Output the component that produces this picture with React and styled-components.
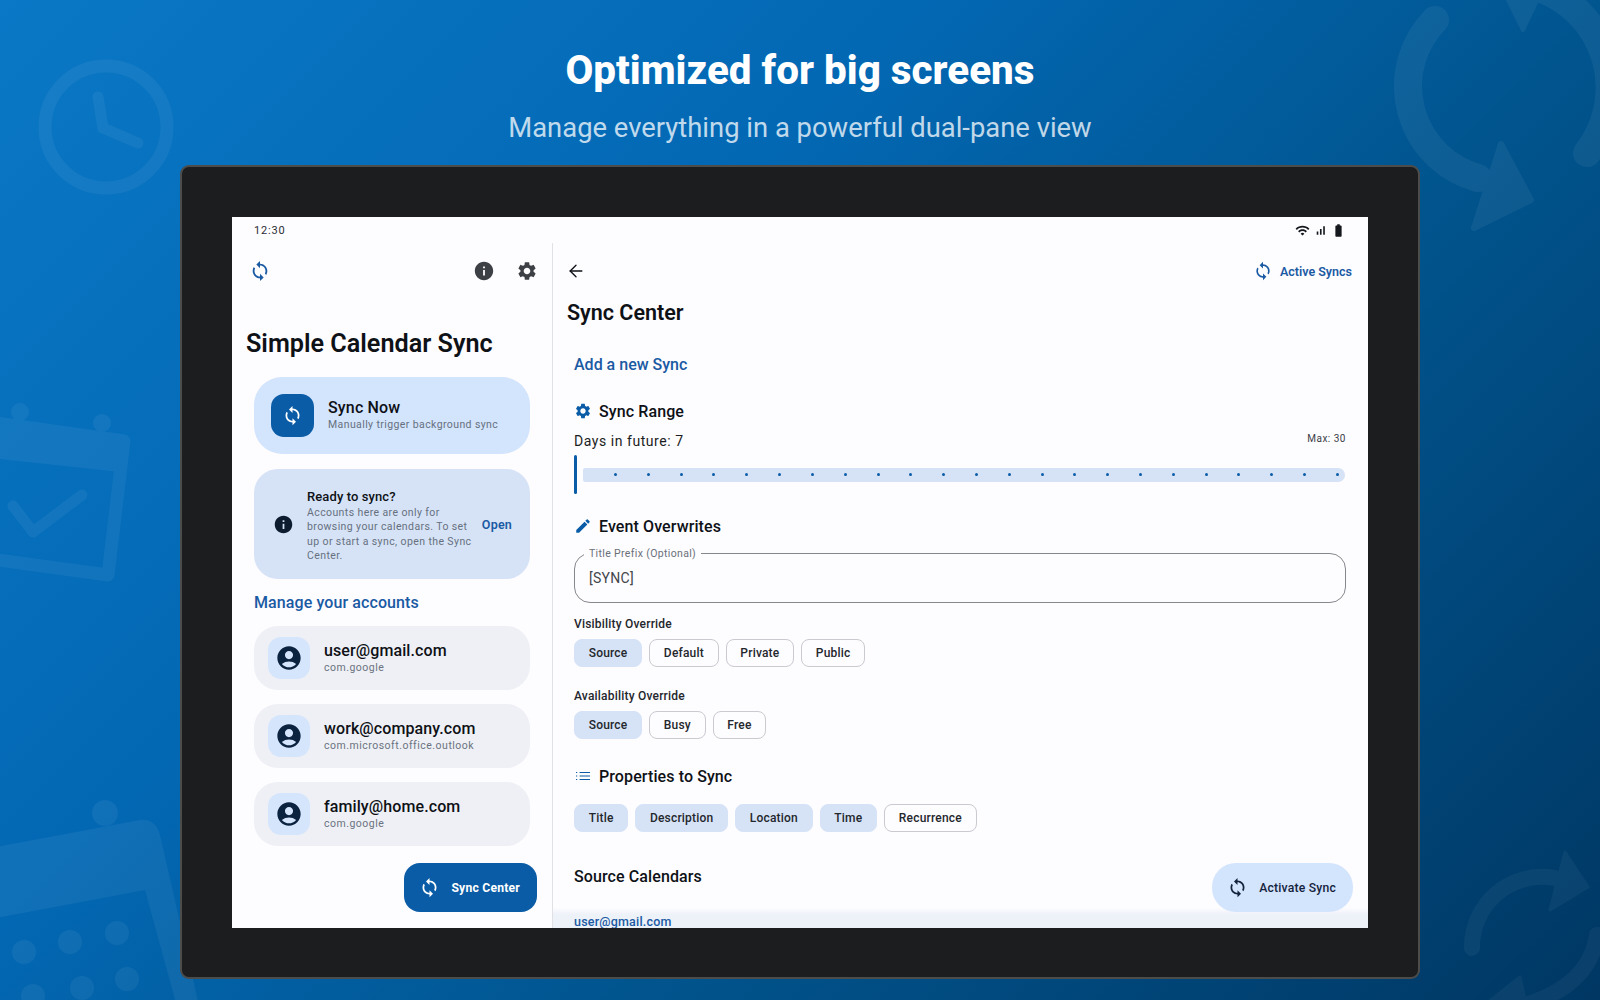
import React from "react"
import styled, { createGlobalStyle } from "styled-components"
import { ArrowLeft } from "lucide-react"
import {
  MdAccountCircle,
  MdBatteryFull,
  MdEdit,
  MdInfo,
  MdSettings,
  MdSignalCellularAlt,
  MdSync,
  MdWifi,
} from "react-icons/md"

const colors = {
  primary: "#0a5ca6",
  link: "#1a5aa3",
  ink: "#0e1116",
  muted: "#66707e",
  tonal: "#d6e3f7",
  tonalBright: "#d3e4fd",
  surface: "#fdfcff",
  neutral: "#eef0f5",
}

const GlobalStyle = createGlobalStyle`
  html, body {
    margin: 0;
    padding: 0;
    background: #025a9c;
  }

  * {
    box-sizing: border-box;
  }
`

const Page = styled.div`
  position: relative;
  width: 1600px;
  height: 1000px;
  overflow: hidden;
  padding-top: 43px;
  font-family: Roboto, "Liberation Sans", sans-serif;
  background: linear-gradient(135deg, #0a78c6 0%, #0368b4 35%, #01558f 62%, #003763 100%);
`

const Backdrop = styled.svg`
  position: absolute;
  inset: 0;
`

const Header = styled.header`
  position: relative;
  text-align: center;
`

const Headline = styled.h1`
  margin: 0;
  font-size: 40.4px;
  line-height: 56px;
  font-weight: 800;
  color: #fff;
`

const Subline = styled.p`
  margin: 1px 0 0;
  font-size: 27.4px;
  line-height: 56px;
  font-weight: 400;
  color: rgba(255, 255, 255, 0.76);
`

const Tablet = styled.div`
  position: relative;
  width: 1240px;
  height: 814px;
  margin: 9px 0 0 180px;
  padding: 50px;
  background: #1c1d1e;
  border: 2px solid #4c4c4b;
  border-radius: 9px;
`

const Screen = styled.div`
  position: relative;
  display: flex;
  flex-direction: column;
  height: 711px;
  overflow: hidden;
  background: ${colors.surface};
`

const StatusBar = styled.div`
  flex: none;
  display: flex;
  align-items: center;
  justify-content: space-between;
  height: 26px;
  padding: 0 22px;
  font-size: 11px;
  letter-spacing: 0.8px;
  color: #2b2e33;
`

const StatusIcons = styled.div`
  display: flex;
  align-items: center;
  gap: 4px;
  color: #15181c;
  font-size: 15px;
`

const Panes = styled.div`
  flex: 1;
  min-height: 0;
  display: grid;
  grid-template-columns: 321px 1fr;
`

const Pane = styled.section`
  position: relative;
  min-width: 0;
  overflow: hidden;
`

const ListPane = styled(Pane)`
  padding: 0 22px;
  border-right: 1px solid #e0e1e5;
`

const DetailPane = styled(Pane)`
  display: flex;
  flex-direction: column;
`

const Toolbar = styled.div`
  flex: none;
  display: flex;
  align-items: center;
  justify-content: space-between;
  height: 54px;
  padding: ${p => p.$padding || "0"};
`

const ToolbarGroup = styled.div`
  display: flex;
  align-items: center;
  gap: ${p => p.$gap || 0}px;
  margin-right: ${p => p.$pull || 0}px;
`

const IconSlot = styled.span`
  display: inline-flex;
  align-items: center;
  justify-content: center;
  flex: none;
  margin-left: ${p => p.$pull || 0}px;
  font-size: ${p => p.$size || 24}px;
  color: ${p => p.$color || "inherit"};
`

const AppTitle = styled.h1`
  margin: 31px 0 0 -8px;
  font-size: 25.2px;
  line-height: 32px;
  font-weight: 600;
  color: ${colors.ink};
`

const SyncNowCard = styled.div`
  display: flex;
  align-items: center;
  gap: 14px;
  height: 77px;
  margin-top: 17px;
  padding: 0 17px;
  border-radius: 28px;
  background: ${colors.tonalBright};
`

const SyncNowIcon = styled.div`
  display: flex;
  align-items: center;
  justify-content: center;
  width: 43px;
  height: 43px;
  border-radius: 13px;
  color: #fff;
  font-size: 21px;
  background: ${colors.primary};
`

const CardTitle = styled.div`
  font-size: 16px;
  line-height: 20px;
  font-weight: 500;
  letter-spacing: 0.15px;
  color: ${colors.ink};
`

const CardNote = styled.div`
  font-size: 10.5px;
  line-height: 14.5px;
  letter-spacing: 0.4px;
  white-space: nowrap;
  color: ${colors.muted};
`

const NoticeCard = styled.div`
  display: flex;
  align-items: center;
  height: 110px;
  margin-top: 15px;
  padding: 0 18px 0 19px;
  border-radius: 24px;
  background: ${colors.tonal};
`

const NoticeBody = styled.div`
  flex: 1;
  margin-left: 13px;
  padding-top: 3px;
`

const NoticeTitle = styled.div`
  font-size: 13px;
  line-height: 18px;
  font-weight: 500;
  letter-spacing: 0.1px;
  color: ${colors.ink};
`

const OpenLink = styled.span`
  flex: none;
  font-size: 12.5px;
  font-weight: 600;
  letter-spacing: 0.2px;
  color: ${colors.link};
`

const ManageTitle = styled.h2`
  margin: 14px 0 13px;
  font-size: 16px;
  line-height: 20px;
  font-weight: 500;
  letter-spacing: 0.1px;
  color: ${colors.link};
`

const AccountList = styled.div`
  display: flex;
  flex-direction: column;
  gap: 14.5px;
`

const AccountCard = styled.div`
  display: flex;
  align-items: center;
  gap: 14px;
  height: 63.5px;
  padding: 0 14px;
  border-radius: 24px;
  background: ${colors.neutral};
`

const AccountIcon = styled.div`
  display: flex;
  align-items: center;
  justify-content: center;
  width: 42px;
  height: 42px;
  border-radius: 13px;
  font-size: 28px;
  color: #0c2340;
  background: #d5e5fc;
`

const AccountEmail = styled.div`
  font-size: 16px;
  line-height: 20px;
  font-weight: 500;
  letter-spacing: 0.1px;
  color: ${colors.ink};
`

const AccountKind = styled.div`
  font-size: 10.5px;
  line-height: 14px;
  letter-spacing: 0.5px;
  color: #6b7280;
`

const Fab = styled.button`
  position: absolute;
  right: ${p => p.$right}px;
  bottom: 16px;
  display: flex;
  align-items: center;
  gap: 11px;
  height: 49px;
  border: 0;
  border-radius: ${p => p.$radius}px;
  font-family: inherit;
  font-size: 12.2px;
  font-weight: ${p => p.$weight};
  letter-spacing: 0.2px;
  padding: 0 ${p => p.$pad}px 0 15px;
  color: ${p => p.$color};
  background: ${p => p.$bg};
`

const ActiveSyncs = styled.div`
  display: flex;
  align-items: center;
  gap: 7px;
  font-size: 12.5px;
  font-weight: 600;
  color: ${colors.link};
`

const DetailTitle = styled.h1`
  flex: none;
  margin: 2px 0 0 14px;
  font-size: 21.5px;
  line-height: 28px;
  font-weight: 600;
  color: ${colors.ink};
`

const Form = styled.div`
  flex: none;
  padding: 0 22px 0 21px;
`

const AddTitle = styled.h2`
  margin: 27px 0 0;
  font-size: 16px;
  line-height: 22px;
  font-weight: 500;
  color: ${colors.link};
`

const SectionHead = styled.h3`
  display: flex;
  align-items: center;
  gap: 7px;
  height: 22px;
  margin: ${p => p.$top}px 0 0;
  font-size: 16px;
  font-weight: 500;
  letter-spacing: 0.1px;
  color: ${colors.ink};
`

const RangeRow = styled.div`
  display: flex;
  justify-content: space-between;
  height: 20px;
  margin-top: 9px;
`

const RangeLabel = styled.span`
  font-size: 14px;
  line-height: 20px;
  letter-spacing: 0.55px;
  color: #1b1e22;
`

const RangeMax = styled.span`
  margin-top: -2px;
  font-size: 10px;
  line-height: 20px;
  letter-spacing: 0.5px;
  color: #3c4046;
`

const Slider = styled.div`
  display: flex;
  align-items: center;
  gap: 6px;
  height: 39px;
  margin-top: 4px;
  margin-right: 1px;
`

const SliderHandle = styled.div`
  flex: none;
  width: 3px;
  height: 39px;
  border-radius: 2px;
  background: ${colors.primary};
`

const SliderTrack = styled.div`
  flex: 1;
  display: flex;
  align-items: center;
  justify-content: space-between;
  height: 14px;
  padding: 0 6px 0 31px;
  border-radius: 2px 7px 7px 2px;
  background: ${colors.tonal};
`

const SliderDot = styled.i`
  width: 3px;
  height: 3px;
  border-radius: 50%;
  background: ${colors.primary};
`

const TextField = styled.div`
  position: relative;
  height: 50px;
  margin-top: 16px;
  padding: 14px 14px 0;
  border: 1px solid #85888d;
  border-radius: 16px;
  font-size: 14px;
  line-height: 20px;
  letter-spacing: 0.3px;
  color: #43464b;
`

const FieldLabel = styled.span`
  position: absolute;
  top: -7px;
  left: 9px;
  padding: 0 5px;
  font-size: 10.5px;
  line-height: 13px;
  letter-spacing: 0.35px;
  color: #6a7079;
  background: ${colors.surface};
`

const GroupLabel = styled.div`
  margin-top: ${p => p.$top}px;
  font-size: 12px;
  line-height: 16px;
  font-weight: 500;
  letter-spacing: 0.2px;
  color: #24272c;
`

const ChipRow = styled.div`
  display: flex;
  gap: 7px;
  margin-top: ${p => p.$top}px;
`

const Chip = styled.span`
  display: flex;
  align-items: center;
  height: 28px;
  padding: 0 13.7px;
  border-radius: 8px;
  border: 1px solid ${p => (p.$on ? colors.tonal : "#c9cbd0")};
  font-size: 12px;
  font-weight: 500;
  letter-spacing: 0.2px;
  color: #24272c;
  background: ${p => (p.$on ? colors.tonal : "transparent")};
`

const SourceTitle = styled.h3`
  margin: 34px 0 0;
  font-size: 16px;
  line-height: 22px;
  font-weight: 500;
  letter-spacing: 0.1px;
  color: ${colors.ink};
`

const SourceBand = styled.div`
  flex: 1;
  margin-top: 20px;
  padding: 5px 21px 0;
  font-size: 12.5px;
  line-height: 18px;
  font-weight: 500;
  letter-spacing: 0.2px;
  color: ${colors.link};
  background: linear-gradient(180deg, ${colors.surface} 0%, #edf1f8 30%);
`

const ListGlyph = () => (
  <svg width="18" height="18" viewBox="0 0 18 18" fill="none" stroke="currentColor" strokeWidth="1.1">
    <path d="M5.6 5.5H16M5.6 9H16M5.6 12.5H16" />
    <path d="M2 5.5H3.2M2 9H3.2M2 12.5H3.2" />
  </svg>
)

const BackdropArt = () => (
  <Backdrop viewBox="0 0 1600 1000" width="1600" height="1000" aria-hidden="true">
    <g opacity="0.05" fill="none" stroke="#fff" strokeLinecap="round" strokeLinejoin="round">
      <circle cx="106" cy="127" r="61" strokeWidth="13" />
      <path d="M98 97 L103 128 L138 143" strokeWidth="11" />
      <path d="M-60 415 L124 441 L108 575 L-60 552" strokeWidth="13" />
      <path d="M13 506 L33 532 L82 495" strokeWidth="11" />
      <circle cx="20" cy="412" r="9" fill="#fff" stroke="none" />
      <circle cx="102" cy="423" r="9" fill="#fff" stroke="none" />
      <path d="M-10 425 L124 443 L120 472 L-10 458 Z" fill="#fff" stroke="none" />
      <path
        d="M-10 848 L140 820 Q155 818 160 835 L200 1010 L178 1010 L145 890 L-10 919 Z"
        fill="#fff"
        stroke="none"
      />
      <circle cx="105" cy="813" r="13" fill="#fff" stroke="none" />
      {[
        [24, 952],
        [70, 942],
        [117, 933],
        [33, 996],
        [82, 988],
        [127, 979],
      ].map(([cx, cy]) => (
        <circle key={cx} cx={cx} cy={cy} r="12" fill="#fff" stroke="none" />
      ))}
      <path d="M1435 20 A95 95 0 0 0 1478 178" strokeWidth="28" />
      <path d="M1587 153 A106 106 0 0 0 1540 -12" strokeWidth="28" />
      <path d="M1501 144 L1531 200 L1474 228 Z" fill="#fff" strokeWidth="6" />
      <path d="M1503 -10 L1523 30 L1542 -10 Z" fill="#fff" strokeWidth="4" />
    </g>
    <g opacity="0.04" fill="none" stroke="#fff" strokeLinecap="round" strokeLinejoin="round">
      <path d="M1472 948 A70 70 0 0 1 1555 878" strokeWidth="16" />
      <path d="M1597 935 Q1590 985 1525 1005" strokeWidth="16" />
      <path d="M1565 852 L1588 887 L1550 910 Z" fill="#fff" strokeWidth="3" />
      <path d="M1520 977 L1487 1003 L1526 1003 Z" fill="#fff" strokeWidth="3" />
    </g>
  </Backdrop>
)

const accounts = [
  { email: "user@gmail.com", kind: "com.google" },
  { email: "work@company.com", kind: "com.microsoft.office.outlook" },
  { email: "family@home.com", kind: "com.google" },
]

const visibility = ["Source", "Default", "Private", "Public"]
const availability = ["Source", "Busy", "Free"]
const properties = [
  { label: "Title", on: true },
  { label: "Description", on: true },
  { label: "Location", on: true },
  { label: "Time", on: true },
  { label: "Recurrence", on: false },
]

const App = () => (
  <Page>
    <GlobalStyle />
    <BackdropArt />
    <Header>
      <Headline>Optimized for big screens</Headline>
      <Subline>Manage everything in a powerful dual-pane view</Subline>
    </Header>
    <Tablet>
      <Screen>
        <StatusBar>
          <span>12:30</span>
          <StatusIcons>
            <MdWifi />
            <IconSlot $size={13}>
              <MdSignalCellularAlt />
            </IconSlot>
            <MdBatteryFull />
          </StatusIcons>
        </StatusBar>
        <Panes>
          <ListPane>
            <Toolbar $padding="2px 0 0">
              <IconSlot $size={22} $color={colors.link} $pull={-5}>
                <MdSync />
              </IconSlot>
              <ToolbarGroup $gap={21} $pull={-8}>
                <IconSlot $size={22} $color="#3d4045">
                  <MdInfo />
                </IconSlot>
                <IconSlot $size={22} $color="#3d4045">
                  <MdSettings />
                </IconSlot>
              </ToolbarGroup>
            </Toolbar>
            <AppTitle>Simple Calendar Sync</AppTitle>
            <SyncNowCard>
              <SyncNowIcon>
                <MdSync />
              </SyncNowIcon>
              <div>
                <CardTitle>Sync Now</CardTitle>
                <CardNote>Manually trigger background sync</CardNote>
              </div>
            </SyncNowCard>
            <NoticeCard>
              <IconSlot $size={21} $color="#0e1c30">
                <MdInfo />
              </IconSlot>
              <NoticeBody>
                <NoticeTitle>Ready to sync?</NoticeTitle>
                <CardNote>
                  Accounts here are only for
                  <br />
                  browsing your calendars. To set
                  <br />
                  up or start a sync, open the Sync
                  <br />
                  Center.
                </CardNote>
              </NoticeBody>
              <OpenLink>Open</OpenLink>
            </NoticeCard>
            <ManageTitle>Manage your accounts</ManageTitle>
            <AccountList>
              {accounts.map(account => (
                <AccountCard key={account.email}>
                  <AccountIcon>
                    <MdAccountCircle />
                  </AccountIcon>
                  <div>
                    <AccountEmail>{account.email}</AccountEmail>
                    <AccountKind>{account.kind}</AccountKind>
                  </div>
                </AccountCard>
              ))}
            </AccountList>
            <Fab $right={15} $radius={16} $weight={700} $pad={17} $color="#fff" $bg={colors.primary}>
              <IconSlot $size={21}>
                <MdSync />
              </IconSlot>
              Sync Center
            </Fab>
          </ListPane>
          <DetailPane>
            <Toolbar $padding="2px 16px 0 13px">
              <IconSlot $size={22} $color={colors.ink}>
                <ArrowLeft size={20} strokeWidth={1.6} />
              </IconSlot>
              <ActiveSyncs>
                <IconSlot $size={20}>
                  <MdSync />
                </IconSlot>
                Active Syncs
              </ActiveSyncs>
            </Toolbar>
            <DetailTitle>Sync Center</DetailTitle>
            <Form>
              <AddTitle>Add a new Sync</AddTitle>
              <SectionHead $top={24}>
                <IconSlot $size={18} $color={colors.primary}>
                  <MdSettings />
                </IconSlot>
                Sync Range
              </SectionHead>
              <RangeRow>
                <RangeLabel>Days in future: 7</RangeLabel>
                <RangeMax>Max: 30</RangeMax>
              </RangeRow>
              <Slider>
                <SliderHandle />
                <SliderTrack>
                  {Array.from({ length: 23 }, (_, i) => (
                    <SliderDot key={i} />
                  ))}
                </SliderTrack>
              </Slider>
              <SectionHead $top={21}>
                <IconSlot $size={18} $color={colors.primary}>
                  <MdEdit />
                </IconSlot>
                Event Overwrites
              </SectionHead>
              <TextField>
                <FieldLabel>Title Prefix (Optional)</FieldLabel>
                [SYNC]
              </TextField>
              <GroupLabel $top={13}>Visibility Override</GroupLabel>
              <ChipRow $top={7}>
                {visibility.map((item, i) => (
                  <Chip key={item} $on={i === 0}>
                    {item}
                  </Chip>
                ))}
              </ChipRow>
              <GroupLabel $top={21}>Availability Override</GroupLabel>
              <ChipRow $top={7}>
                {availability.map((item, i) => (
                  <Chip key={item} $on={i === 0}>
                    {item}
                  </Chip>
                ))}
              </ChipRow>
              <SectionHead $top={26}>
                <IconSlot $size={18} $color={colors.primary}>
                  <ListGlyph />
                </IconSlot>
                Properties to Sync
              </SectionHead>
              <ChipRow $top={17}>
                {properties.map(item => (
                  <Chip key={item.label} $on={item.on}>
                    {item.label}
                  </Chip>
                ))}
              </ChipRow>
              <SourceTitle>Source Calendars</SourceTitle>
            </Form>
            <SourceBand>user@gmail.com</SourceBand>
            <Fab
              $right={15}
              $radius={24}
              $weight={500}
              $pad={17}
              $color="#14233c"
              $bg={colors.tonalBright}
            >
              <IconSlot $size={21}>
                <MdSync />
              </IconSlot>
              Activate Sync
            </Fab>
          </DetailPane>
        </Panes>
      </Screen>
    </Tablet>
  </Page>
)

export default App
